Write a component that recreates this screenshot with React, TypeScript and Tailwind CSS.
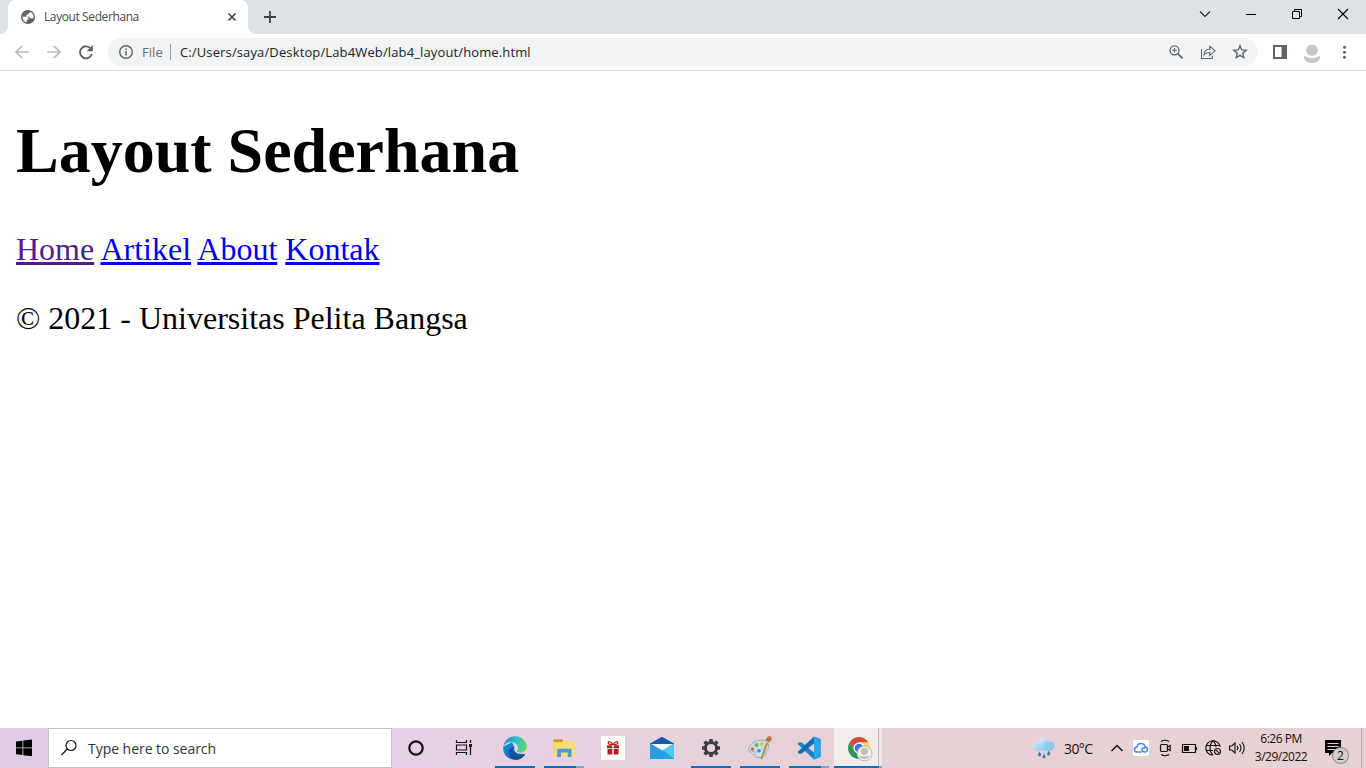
import type { ReactNode } from "react";

function TabStrip() {
  return (
    <div className="flex h-[34px] shrink-0 bg-[#dee1e6]">
      <div className="flex w-2 items-end bg-white">
        <div className="h-full w-full rounded-br-lg bg-[#dee1e6]" />
      </div>
      <div className="w-60 bg-[#dee1e6]">
        <div className="flex h-full items-center rounded-t-lg bg-white pl-3">
          <svg width="16" height="16" viewBox="0 0 16 16">
            <circle cx="8" cy="8" r="7" fill="#5f6368" />
            <path d="M2.400 7.800h3.800c1.500 0 2.300.8 2.300 2v1h-1.700v2.800C4.200 13.100 2.300 10.700 2.400 7.800ZM9.800 2.700c2.300.8 3.900 2.900 3.900 5.300l-.2 1.300H11c-1 0-1.500-.6-1.500-1.600H6.200V6.100c1 0 1.600-.5 1.600-1.500h1c.7 0 1-.6 1-1.900Z" fill="#fff" />
          </svg>
          <span className="ml-2 w-[180px] whitespace-nowrap text-[12px] leading-4 tracking-[-0.4px] text-[#45494d]">Layout Sederhana</span>
          <svg width="16" height="16" viewBox="0 0 16 16" className="shrink-0">
            <path d="m4.500 4.500 7 7m0-7-7 7" stroke="#3c4043" strokeWidth="1.600" />
          </svg>
        </div>
      </div>
      <div className="w-2 bg-white">
        <div className="h-full rounded-bl-lg bg-[#dee1e6]" />
      </div>
      <svg width="28" height="34" viewBox="0 0 28 34">
        <path d="M14 11v12M8 17h12" stroke="#3c4043" strokeWidth="1.800" />
      </svg>
      <div className="ml-auto flex">
        <svg width="46" height="28" viewBox="0 0 46 28">
          <path d="m18 11.500 5 5 5-5" fill="none" stroke="#202124" strokeWidth="1.100" />
        </svg>
        <svg width="46" height="28" viewBox="0 0 46 28">
          <path d="M18 14.500h10" stroke="#000" />
        </svg>
        <svg width="46" height="28" viewBox="0 0 46 28">
          <path d="M18.500 11.500h7v7h-7zM20.500 11V9.500h7v7H26" fill="none" stroke="#000" />
        </svg>
        <svg width="46" height="28" viewBox="0 0 46 28">
          <path d="m18 9 10 10m0-10L18 19" stroke="#000" strokeWidth="1.100" />
        </svg>
      </div>
    </div>
  );
}

function Toolbar() {
  return (
    <div className="flex h-[37px] shrink-0 items-center border-b border-[#dadce0] bg-white pl-[14px]">
      <svg width="16" height="16" viewBox="0 0 16 16">
        <path d="M14.700 8H2m6.200-6.200L2 8l6.200 6.200" fill="none" stroke="#b8babd" strokeWidth="1.700" />
      </svg>
      <svg width="16" height="16" viewBox="0 0 16 16" className="ml-4">
        <path d="M1.300 8H14M7.800 1.800 14 8l-6.200 6.200" fill="none" stroke="#b8babd" strokeWidth="1.700" />
      </svg>
      <svg width="16" height="16" viewBox="0 0 16 16" className="ml-4">
        <path d="M12.900 4.800A6 6 0 1 0 13.800 10" fill="none" stroke="#5f6368" strokeWidth="1.900" />
        <path d="M14.800 1v6.200H8.700Z" fill="#5f6368" />
      </svg>
      <div className="ml-[14px] flex h-7 w-[1150px] items-center rounded-full bg-[#f1f3f4] pl-[10px]">
        <svg width="16" height="16" viewBox="0 0 16 16">
          <circle cx="8" cy="8" r="6.300" fill="none" stroke="#5f6368" strokeWidth="1.400" />
          <path d="M8 7v4.500M8 4.400v1.500" stroke="#5f6368" strokeWidth="1.500" />
        </svg>
        <span className="ml-2 w-[28px] pt-px text-[13px] tracking-[0.05px] text-[#6a6e73]">File</span>
        <span className="h-4 w-px bg-[#9aa0a6]" />
        <span className="ml-[9px] whitespace-nowrap pt-[2px] text-[13px] tracking-[0.13px] text-[#202124]">C:/Users/saya/Desktop/Lab4Web/lab4_layout/home.html</span>
        <div className="ml-auto flex gap-4 pr-[10px]">
          <svg width="16" height="16" viewBox="0 0 16 16" fill="none" stroke="#5f6368">
            <circle cx="6.500" cy="6.300" r="4.500" strokeWidth="1.300" />
            <path d="m9.800 9.600 4.700 4.700" strokeWidth="1.700" />
            <path d="M6.500 4v4.600M4.200 6.300h4.600" strokeWidth="1.100" />
          </svg>
          <svg width="16" height="16" viewBox="0 0 16 16" fill="none" stroke="#5f6368" strokeWidth="1.100">
            <path d="M1.500 5.200v9.300h10.800v-3" />
            <path d="M4 11c.3-4 2.200-5.900 5.800-6V2.200L15 6.800l-5.200 4.500V8.500C7 8.500 5.200 9.300 4 11Z" />
          </svg>
          <svg width="16" height="16" viewBox="0 0 16 16">
            <path d="m8 1.800 1.700 4.100 4.500.4-3.400 2.900 1 4.400L8 11.300l-3.800 2.300 1-4.400-3.400-2.900 4.500-.4Z" fill="none" stroke="#5f6368" strokeWidth="1.400" />
          </svg>
        </div>
      </div>
      <svg width="16" height="16" viewBox="0 0 16 16" className="ml-[14px]">
        <path d="M1 1h14v14H1Zm2 2v10h6.500V3Z" fill="#5f6368" fillRule="evenodd" />
      </svg>
      <svg width="18" height="20" viewBox="0 0 18 20" className="ml-[15px] mt-[3px]">
        <circle cx="9" cy="6.200" r="5.800" fill="#c6c6c6" />
        <path d="M1 12.500q1.500-.5 2.500.2 5.500 3 11 0 1-.7 2.500-.2c.7 3.800-3.500 6.500-8 6.500s-8.700-2.700-8-6.500Z" fill="#c6c6c6" />
      </svg>
      <svg width="16" height="16" viewBox="0 0 16 16" className="ml-[15px]">
        <g fill="#5f6368">
          <circle cx="8.500" cy="3.200" r="1.500" />
          <circle cx="8.500" cy="8.200" r="1.500" />
          <circle cx="8.500" cy="13.200" r="1.500" />
        </g>
      </svg>
    </div>
  );
}

function Page() {
  const link = "underline decoration-[3px] underline-offset-[2px] [text-decoration-skip-ink:none]";
  return (
    <main className="flex-1 bg-white px-4 pt-[43px] font-['Liberation_Serif',serif] text-[32px] leading-[37px] text-black">
      <h1 className="text-[64px] leading-[74px] font-bold">Layout Sederhana</h1>
      <nav className="mt-[43px]">
        <a className={`text-[#551a8b] ${link}`} href="#home">Home</a>{" "}
        <a className={`text-[#0000ee] ${link}`} href="#artikel">Artikel</a>{" "}
        <a className={`text-[#0000ee] ${link}`} href="#about">About</a>{" "}
        <a className={`text-[#0000ee] ${link}`} href="#kontak">Kontak</a>
      </nav>
      <p className="mt-8">© 2021 - Universitas Pelita Bangsa</p>
    </main>
  );
}

function TaskButton({ children, line = "none" }: { children: ReactNode; line?: "none" | "single" | "multi" }) {
  return (
    <div className="flex h-10 w-[49px] flex-col items-center">
      <div className="flex h-[38px] items-center pt-[2px]">{children}</div>
      {line !== "none" && (
        <div className="ml-px flex h-[2px] w-10 bg-[#0b6fc7]">
          {line === "multi" && <span className="ml-auto w-2 bg-[#70a8dc]" />}
        </div>
      )}
    </div>
  );
}

function TaskApps() {
  return (
    <div className="flex">
      <svg width="48" height="40" viewBox="0 0 48 40">
        <circle cx="24" cy="20" r="6.700" fill="none" stroke="#111" strokeWidth="2.200" />
      </svg>
      <svg width="50" height="40" viewBox="0 0 50 40" fill="none" stroke="#111" strokeWidth="1.200">
        <path d="M16.500 12v2.500h10V12M16.500 27v-2.500h10V27M16.500 17h10v5h-10zM30.500 12v3m0 4v8" />
        <path d="M29 17.500h3" strokeWidth="3" />
      </svg>
      <TaskButton line="single">
        <svg width="24" height="24" viewBox="0 0 24 24">
          <defs>
            <linearGradient id="edgeTop" x1="0" x2="1" y1=".3" y2=".5"><stop stopColor="#1f8fdc" /><stop offset=".5" stopColor="#2bbfd0" /><stop offset="1" stopColor="#62db68" /></linearGradient>
            <linearGradient id="edgeLeft" x1="0" x2="1" y1="0" y2="1"><stop stopColor="#1c93dc" /><stop offset="1" stopColor="#0a56aa" /></linearGradient>
          </defs>
          <path d="M.3 10.800C-.7 18 5 23.800 12 23.800c4 0 8-2 10-5.600L14 17 9 6Z" fill="url(#edgeLeft)" />
          <path d="M.3 10.800C1.200 4.500 5.900.2 12 .2c6.600 0 11.800 4.800 11.800 10.600 0 3.700-2.800 5.900-6 5.900-2.700 0-4.500-.8-4.300-1.900.1-.7 1.500-1.300 1.400-3.100C14.700 8.600 11.500 6 7.700 6 4.300 6 1.700 8 .3 10.800Z" fill="url(#edgeTop)" />
          <path d="M9.300 11.300c-3 4.300.2 8.900 4.700 9.300 3.400.3 6.100-.7 8.200-2.400-2 3.300-5.600 5.600-9.600 5.600-6.500 0-9.500-9.300-3.300-12.500Z" fill="#124b93" />
          <path d="M9.300 11.300c-3 4.300.2 8.900 4.700 9.300 3.400.3 6.100-.7 8.200-2.400C17.500 19.700 12.500 18.800 11 15.300c-.5-1.500-.5-3 .2-4Z" fill="#14549e" />
          <path d="M14 14.600c-1.200 1.300 1 2.100 3.800 2.100 1.700 0 3.200-.6 4.300-1.500-1.600 2.700-7.400 3.300-9.800.5-1.600-1.800-1.500-4.300.5-4.700 1.700-.3 2.600 1.900 1.200 3.600Z" fill="#e7d5e2" />
        </svg>
      </TaskButton>
      <TaskButton line="multi">
        <svg width="24" height="24" viewBox="0 0 24 24">
          <path d="M1.500 4.200h9l1.500 1.500h10.500V20h-21Z" fill="#f6cb54" />
          <path d="M1.500 3.200h8.900l.8 1.500-1 1.600H1.500Z" fill="#d59b20" />
          <path d="M1.500 6.300h9l1.300-.7h10.700V20h-21Z" fill="#ffdc75" />
          <path d="M5.200 12.800h14.300V21h-3.800v-4.600H9V21H5.200Z" fill="#479bce" />
        </svg>
      </TaskButton>
      <TaskButton>
        <svg width="24" height="24" viewBox="0 0 24 24">
          <path d="M0 0h24v24H0z" fill="#fff" />
          <path d="M6 9.200h5.300v3H6zm6.700 0H18v3h-5.300zM6.500 13h4.800v5.500H6.500zm6.200 0h4.800v5.500h-4.800z" fill="#b81c1f" />
          <path d="M11.800 8.500C8 8.700 6.700 7.600 7.200 6.300c.8-1.500 3.800.2 4.600 2.200Zm.4 0c3.800.2 5.100-.9 4.600-2.200-.8-1.500-3.800.2-4.600 2.200Z" fill="none" stroke="#b81c1f" strokeWidth="1.200" />
        </svg>
      </TaskButton>
      <TaskButton>
        <svg width="26" height="24" viewBox="0 0 26 24">
          <path d="M1 7.500 13 .8l12 6.700V15H1Z" fill="#145ba8" />
          <path d="M1 7.800 13 14l12-6.200V23H1Z" fill="#2aa5e6" />
          <path d="M2 8h22l-10.500 6.500Z" fill="#f7fbff" />
          <path d="M14 14 25 7.800V23Z" fill="#50c9f4" />
          <path d="M1 7.800 25 23H1Z" fill="#279fe5" />
        </svg>
      </TaskButton>
      <TaskButton line="single">
        <svg width="20" height="20" viewBox="0 0 20 20">
          <g stroke="#3c3c40" strokeWidth="3.500">
            <path d="M10 1v3m0 12v3M1 10h3m12 0h3M3.600 3.600l2.200 2.200m8.400 8.400 2.200 2.200m0-12.800-2.200 2.200m-8.400 8.400-2.200 2.200" />
            <circle cx="10" cy="10" r="5.600" fill="none" strokeWidth="3" />
          </g>
        </svg>
      </TaskButton>
      <TaskButton line="single">
        <svg width="26" height="26" viewBox="0 0 26 26">
          <path d="M2 13.500C3 8.200 9.300 4.500 16 5.300c4 .5 6.300 3.500 5.500 7.200-.8 3.500-3 3.300-2.700 5.800.2 2.600-3.300 5.100-8.600 4-3.600-.7-3.900-3.100-2.200-4.400 1.300-1-.1-2.100-2.500-1.100C3.200 17.700 1.300 16.600 2 13.500Z" fill="#c3e2ef" stroke="#6ea8c5" strokeWidth=".8" />
          <circle cx="5.500" cy="14" r="1.800" fill="#e0574f" />
          <circle cx="9.500" cy="10" r="2" fill="#6dbb3b" />
          <circle cx="14.500" cy="8.700" r="2" fill="#eebf3b" />
          <circle cx="12" cy="15.800" r="1.800" fill="#3d7fd0" />
          <path d="m20.500 7-6.200 17" stroke="#c58b42" strokeWidth="2.100" />
          <path d="M18 5 21 1.500l2.500-.5 1.500 3-3.200 4Z" fill="#b87541" />
          <path d="m18.300 6 4 2" stroke="#dbbf83" strokeWidth="1.500" />
        </svg>
      </TaskButton>
      <TaskButton line="multi">
        <svg width="26" height="26" viewBox="0 0 26 26">
          <path d="M18 1.500 24.500 4v18L18 24.500 3.500 10.700 1.500 9l1.700-1.800 2.500.4L18 17.500Z" fill="#1685ca" />
          <path d="M18 1.500 3.500 15.300l-2 1.700 1.700 1.800 2.500-.4L18 8.500Z" fill="#0671b9" />
          <path d="m18 1.500 6.500 2.500v18L18 24.500Z" fill="#2ba6ed" />
        </svg>
      </TaskButton>
      <div className="ml-px flex h-10 w-12 flex-col">
        <div className="flex h-[38px]">
          <div className="flex w-11 items-center justify-center bg-[#f2edec] pt-[3px] pl-[7px]">
            <svg width="26" height="26" viewBox="0 0 26 26">
              <path d="M2.500 6.500A11 11 0 0 1 21.500 6.500H12L7.200 14.800Z" fill="#d94b3e" />
              <path d="M2.500 6.500A11 11 0 0 0 11.500 23l4.900-8.500H7.200Z" fill="#26965a" />
              <path d="M21.500 6.500A11 11 0 0 1 11.500 23l4.900-8.500L12 6.500Z" fill="#f9d552" />
              <circle cx="12" cy="12" r="5.600" fill="#fff" />
              <circle cx="12" cy="12" r="4.300" fill="#3975dc" />
              <circle cx="17.500" cy="17.500" r="7.500" fill="#f0f0f0" stroke="#aaa5a5" strokeWidth=".8" />
              <circle cx="17.500" cy="15.300" r="3.600" fill="#bdbdbd" />
              <path d="M12.500 19.500c3 1.200 7 1.200 10 0 0 2-2 3.500-5 3.500s-5-1.500-5-3.500Z" fill="#bdbdbd" />
            </svg>
          </div>
          <div className="w-1 border-l border-[#c5b5b5] bg-[#eee5e4]" />
        </div>
        <div className="flex h-[2px] w-full bg-[#0b6fc7]"><span className="ml-auto w-[3px] bg-[#70a8dc]" /></div>
      </div>
    </div>
  );
}

function Tray() {
  return (
    <div className="ml-auto flex h-10 items-center text-[#111]">
      <svg width="24" height="24" viewBox="0 0 24 24">
        <defs><linearGradient id="cloud" x2="1" y2="1"><stop stopColor="#dcf5ff" /><stop offset="1" stopColor="#78b9ed" /></linearGradient></defs>
        <path d="M5.500 14.500C2.600 14.400 1 12.700 1 10.400 1 8 2.800 6.600 5 6.700 6 3.500 8.400 2 11.300 2c2.500 0 4.400 1.300 5.200 3.400 3.500-.5 5.800 1.500 5.800 4.600 0 2.800-2.100 4.500-4.800 4.500Z" fill="url(#cloud)" />
        <path d="M12 9c.8-2.500 3-4 5.200-3.600 3.200.5 5 2.300 5 4.900 0 2.500-2 4.200-4.700 4.200H13Z" fill="#8bc9ef" opacity=".7" />
        <path d="M7.500 15.500 6 18.200a1.600 1.600 0 1 0 3 0Zm4.500 2-1.500 2.700a1.600 1.600 0 1 0 3 0Zm4.700-3-1.500 2.700a1.600 1.600 0 1 0 3 0Z" fill="#397fb9" />
      </svg>
      <span className="ml-2 w-[41px] pt-px text-[14px] tracking-[-0.6px]">30°C</span>
      <svg width="24" height="40" viewBox="0 0 24 40"><path d="m6.500 23 5.500-5.500 5.500 5.500" fill="none" stroke="#111" strokeWidth="1.400" /></svg>
      <svg width="24" height="40" viewBox="0 0 24 40">
        <rect x="4" y="12" width="16" height="16" rx="2" fill="#fff" />
        <path d="M12.500 24H8.400C6.500 24 5.500 22.800 5.500 21.400c0-1.500 1.100-2.500 2.500-2.500.4-2.100 2-3.400 4-3.400 2.200 0 3.700 1.500 4 3.500 1.600.2 2.600 1.200 2.600 2.600 0 1.800-1.600 2.500-2.700 2.400-2-.1-3-1.700-3-2.700 0-1.500 2-1.900 2.800-.6" fill="none" stroke="#4485dc" strokeWidth="1.500" />
      </svg>
      <svg width="24" height="40" viewBox="0 0 24 40" fill="none" stroke="#111" strokeWidth="1.200">
        <path d="M8 13.500q4-2.500 8 0M8 26.500q4 2.500 8 0" />
        <rect x="7.500" y="16.500" width="7" height="7" rx="1.200" />
        <path d="m14.500 19 2.700-1.500v5L14.500 21" />
      </svg>
      <svg width="24" height="40" viewBox="0 0 24 40">
        <path d="M5.500 16.500h13v8h-13zM19.500 19v3" fill="none" stroke="#111" strokeWidth="1.200" />
        <path d="M7 18h5v5H7z" fill="#111" />
      </svg>
      <svg width="24" height="40" viewBox="0 0 24 40" fill="none" stroke="#111" strokeWidth="1.100">
        <path d="M11 27.300A7.300 7.300 0 1 1 19.300 19M12 12.700c-4 4-4 10.600 0 14.600M12 12.700c2 2 3 4 3 6.300M5 17.500h14M5 22.500h7" />
        <circle cx="16.500" cy="23.500" r="3" /><path d="m14.400 21.400 4.200 4.200" />
      </svg>
      <svg width="24" height="40" viewBox="0 0 24 40" fill="none" stroke="#111" strokeWidth="1.100">
        <path d="M4.500 18h2.300l3.200-3v10l-3.200-3H4.500ZM12 17.800q1.700 2.200 0 4.400M14.500 16q3 4 0 8M17 14q4.500 6 0 12" />
      </svg>
      <div className="flex w-16 flex-col items-center whitespace-nowrap text-[12px] leading-[18px] tracking-[-0.5px]">
        <span>6:26 PM</span>
        <span>3/29/2022</span>
      </div>
      <svg width="48" height="40" viewBox="0 0 48 40">
        <path d="M12 12h16v13h-9l-3 3v-3h-4Z" fill="#000" />
        <path d="M14.500 15.500h11m-11 3h11m-11 3h8" stroke="#e7d0d1" />
        <circle cx="27.500" cy="27.500" r="8" fill="#d4cdcd" stroke="#777" strokeWidth=".9" />
        <text x="27.500" y="32" textAnchor="middle" fontSize="12" fill="#111">2</text>
      </svg>
      <div className="h-10 w-px bg-[#b9a8a9]" />
      <div className="w-1" />
    </div>
  );
}

function Taskbar() {
  return (
    <footer className="flex h-10 shrink-0 bg-linear-to-r from-[#dfcce4] via-[#e6d2e2] via-40% to-[#e7d1d2] to-65%">
      <svg width="48" height="40" viewBox="0 0 48 40">
        <path d="m16 13.500 6.500-.8v6.800H16Zm7.300-.9 8.700-1v7.900h-8.700ZM16 20.300h6.500v6.800l-6.500-.8Zm7.300 0H32v7.900l-8.700-1Z" fill="#000" />
      </svg>
      <div className="flex w-[344px] items-center border border-[#c8c2ca] bg-white pl-3">
        <svg width="16" height="18" viewBox="0 0 16 18">
          <circle cx="10" cy="6.500" r="5" fill="none" stroke="#111" strokeWidth="1.200" />
          <path d="m6.400 10-6 6" stroke="#111" strokeWidth="1.200" />
        </svg>
        <span className="ml-[11px] text-[14px] tracking-[-0.04px] text-[#333]">Type here to search</span>
      </div>
      <TaskApps />
      <Tray />
    </footer>
  );
}

export default function App() {
  return (
    <div className="flex h-screen w-full flex-col overflow-hidden bg-white font-['Open_Sans','Noto_Sans',sans-serif]">
      <TabStrip />
      <Toolbar />
      <Page />
      <Taskbar />
    </div>
  );
}
